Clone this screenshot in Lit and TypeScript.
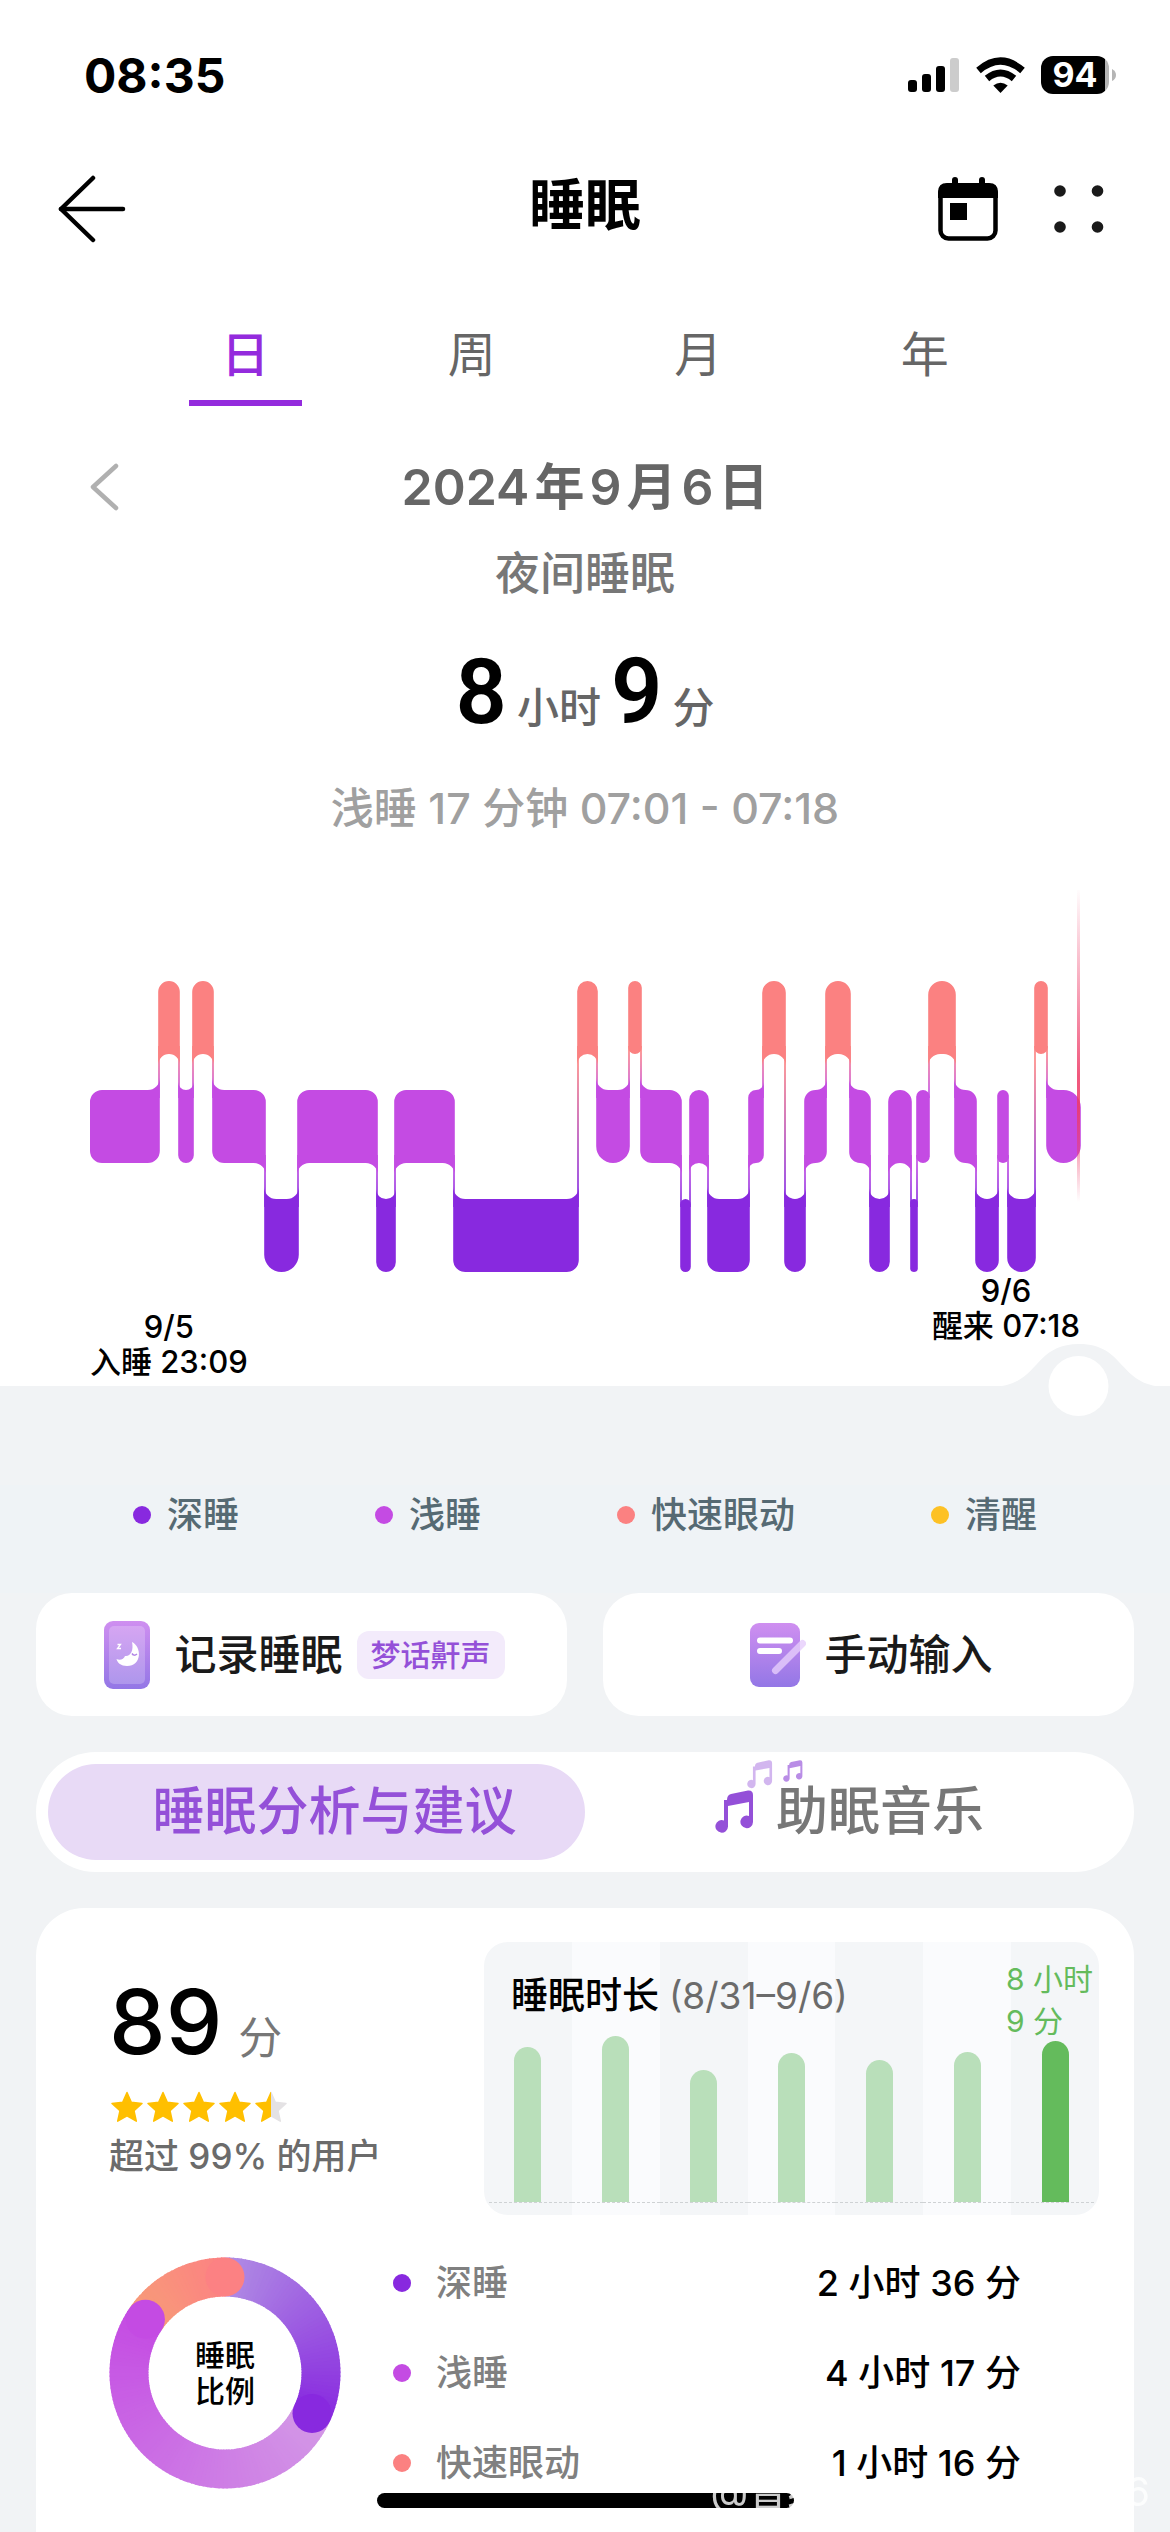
import { LitElement, html, svg, css } from "lit";
import { customElement, state } from "lit/decorators.js";
import { classMap } from "lit/directives/class-map.js";

type Stage = "rem" | "light" | "deep";

const COLORS: Record<Stage, string> = { rem: "#fb8181", light: "#c44be3", deep: "#8829df" };
const LEVELS: Record<Stage, number> = { rem: 981, light: 1090, deep: 1199 };
const BAND = 73;
const NIGHT_START = 90;

/* Each stage with the x at which it ends. */
const NIGHT: [Stage, number][] = [
  ["light", 159], ["rem", 179], ["light", 193], ["rem", 213], ["light", 265], ["deep", 298],
  ["light", 377], ["deep", 395], ["light", 454], ["deep", 578], ["rem", 597], ["light", 629],
  ["rem", 641], ["light", 681], ["deep", 690], ["light", 708], ["deep", 749], ["light", 763],
  ["rem", 785], ["deep", 805], ["light", 826], ["rem", 850], ["light", 870], ["deep", 889],
  ["light", 911], ["deep", 917], ["light", 929], ["rem", 955], ["light", 976], ["deep", 998],
  ["light", 1008], ["deep", 1035], ["rem", 1047], ["light", 1080],
];

const arrow = (points: string) => svg`<polyline points=${points} fill="none" stroke="currentColor" stroke-width="4.5" stroke-linecap="round" stroke-linejoin="round"/>`;

@customElement("sleep-stages")
export class SleepStages extends LitElement {
  static styles = css`
    :host { display: block; }
    .plot { display: block; width: 100%; height: auto; }
  `;

  private band(i: number) {
    const [stage, endX] = NIGHT[i];
    const x0 = (i ? NIGHT[i - 1][1] : NIGHT_START) - (i ? 0.8 : 0);
    const x1 = endX + 0.8;
    const w = x1 - x0;
    const top = LEVELS[stage];
    const bottom = top + BAND;
    const narrow = w < 14.5 && i !== NIGHT.length - 1;
    const r = w < 36 ? w / 2 : 12;
    const s = Math.min(12, w / 2);
    const prev = i ? LEVELS[NIGHT[i - 1][0]] - top : 0;
    const next = i < NIGHT.length - 1 ? LEVELS[NIGHT[i + 1][0]] - top : 0;
    const tl = prev < 0 && !narrow ? 0 : r;
    const bl = prev > 0 && !narrow ? 0 : r;
    const tr = next < 0 && !narrow ? 0 : r;
    const br = next > 0 && !narrow ? 0 : r;
    const d = `M${x0 + tl} ${top}H${x1 - tr}A${tr} ${tr} 0 0 1 ${x1} ${top + tr}V${bottom - br}A${br} ${br} 0 0 1 ${x1 - br} ${bottom}H${x0 + bl}A${bl} ${bl} 0 0 1 ${x0} ${bottom - bl}V${top + tl}A${tl} ${tl} 0 0 1 ${x0 + tl} ${top}Z`;
    const fillet = (x: number, dir: number, y: number, up: number) =>
      `M${x} ${y}V${y + up * s}A${s} ${s} 0 0 ${dir * up > 0 ? 1 : 0} ${x + dir * s} ${y}Z`;
    let extra = "";
    if (!narrow) {
      if (tl === 0) extra += fillet(x0, 1, top, -1);
      if (bl === 0) extra += fillet(x0, 1, bottom, 1);
      if (tr === 0) extra += fillet(x1, -1, top, -1);
      if (br === 0) extra += fillet(x1, -1, bottom, 1);
    }
    return svg`<path d=${d + extra} fill=${COLORS[stage]}/>`;
  }

  private link(i: number) {
    const a = NIGHT[i][0];
    const b = NIGHT[i + 1][0];
    const [hi, lo] = LEVELS[a] < LEVELS[b] ? [a, b] : [b, a];
    const y = LEVELS[hi] + BAND - 8;
    return svg`<rect x=${NIGHT[i][1] - 0.8} y=${y} width="1.6" height=${LEVELS[lo] + 8 - y} fill=${`url(#${hi}-${lo})`}/>`;
  }

  render() {
    const pair = (a: Stage, b: Stage) => svg`
      <linearGradient id=${`${a}-${b}`} x1="0" y1="0" x2="0" y2="1">
        <stop offset="0.1" stop-color=${COLORS[a]}/><stop offset="0.9" stop-color=${COLORS[b]}/>
      </linearGradient>`;
    return html`
      <svg class="plot" viewBox="0 890 1170 383" role="img" aria-label="睡眠阶段">
        <defs>
          ${pair("rem", "light")}${pair("rem", "deep")}${pair("light", "deep")}
          <linearGradient id="cursor" x1="0" y1="0" x2="0" y2="1">
            <stop offset="0" stop-color="#ee3a66" stop-opacity="0"/>
            <stop offset="0.6" stop-color="#ee3a66" stop-opacity="0.85"/>
            <stop offset="0.7" stop-color="#ee3a66" stop-opacity="0.85"/>
            <stop offset="1" stop-color="#ee3a66" stop-opacity="0"/>
          </linearGradient>
        </defs>
        ${NIGHT.slice(0, -1).map((_, i) => this.link(i))}
        ${NIGHT.map((_, i) => this.band(i))}
        <rect x="1077" y="887" width="3" height="315" fill="url(#cursor)"/>
      </svg>`;
  }
}

@customElement("stage-ring")
export class StageRing extends LitElement {
  static styles = css`
    :host { display: grid; width: 232px; height: 232px; place-items: center; flex: none; }
    .ring, .caption { grid-area: 1 / 1; }
    .ring { display: block; width: 232px; height: 232px; }
    .caption { margin: 0; font-size: 30px; line-height: 36px; font-weight: 500; color: #000; text-align: center; }
  `;

  render() {
    const parts = [
      { from: 0, to: 115, start: [176, 140, 228], end: [136, 41, 223] },
      { from: 115, to: 304, start: [211, 152, 230], end: [196, 75, 227] },
      { from: 304, to: 360, start: [247, 155, 120], end: [252, 129, 131] },
    ];
    const at = (deg: number) => {
      const t = (deg * Math.PI) / 180;
      return [116 + 96 * Math.sin(t), 116 - 96 * Math.cos(t)];
    };
    const slices = parts.flatMap((p) => {
      const n = Math.ceil((p.to - p.from) / 2);
      return Array.from({ length: n }, (_, k) => {
        const a = p.from + ((p.to - p.from) * k) / n;
        const b = Math.min(p.to, p.from + ((p.to - p.from) * (k + 1)) / n + 0.6);
        const [x0, y0] = at(a);
        const [x1, y1] = at(b);
        const c = p.start.map((v, j) => Math.round(v + ((p.end[j] - v) * k) / n));
        return svg`<path d=${`M${x0} ${y0}A96 96 0 0 1 ${x1} ${y1}`} fill="none" stroke=${`rgb(${c.join(",")})`} stroke-width="39"/>`;
      });
    });
    return html`
      <svg class="ring" viewBox="0 0 232 232" aria-hidden="true">
        ${slices}
        ${parts.map((p) => {
          const [x, y] = at(p.to);
          return svg`<circle cx=${x} cy=${y} r="19.5" fill=${`rgb(${p.end.join(",")})`}/>`;
        })}
      </svg>
      <p class="caption">睡眠<br />比例</p>`;
  }
}

@customElement("app-root")
export class AppRoot extends LitElement {
  @state() private period = 0;
  @state() private panel = 0;

  static styles = css`
    :host { display: block; font-family: Inter, "Noto Sans CJK SC", sans-serif; color: #000; }
    button { font: inherit; color: inherit; background: none; border: 0; padding: 0; margin: 0; cursor: pointer; }
    h1, h2, p, ul { margin: 0; padding: 0; font-weight: inherit; }
    ul { list-style: none; }
    svg { display: block; flex: none; }

    .page { display: flex; flex-direction: column; min-height: 100vh; background: #f1f3f5; overflow: hidden; }
    .hero { background: #fff; padding-bottom: 5px; }

    .status { display: flex; align-items: center; justify-content: space-between; height: 150px; padding: 0 54px 0 84px; }
    .clock { font-size: 48px; font-weight: 700; }
    .signals { display: flex; align-items: center; gap: 16px; }
    .battery { display: flex; align-items: center; gap: 3px; }
    .level { width: 68px; height: 38px; border-radius: 12px; background: linear-gradient(90deg, #000 94%, #b5b5b5 94%); color: #fff; font-size: 34px; line-height: 38px; font-weight: 700; text-align: center; }

    .bar { display: grid; grid-template-columns: 1fr auto 1fr; align-items: center; height: 118px; padding: 0 56px; }
    .title { font-size: 56px; line-height: 72px; font-weight: 700; padding-bottom: 8px; }
    .actions { display: flex; justify-content: flex-end; align-items: center; gap: 56px; padding-right: 10px; }

    .periods { display: flex; margin-top: 51px; padding: 0 132px; }
    .period { flex: 1; font-size: 48px; line-height: 72px; color: #666; }
    .period::after { content: ""; display: block; width: 50%; height: 6px; margin: 9px auto 0; }
    .period.on { color: #942bdd; font-weight: 500; }
    .period.on::after { background: #942bdd; }

    .day { display: grid; grid-template-columns: 1fr auto 1fr; align-items: center; margin-top: 51px; padding: 0 88px; }
    .prev { justify-self: start; color: #b0b0b0; }
    .date { display: flex; gap: 5px; font-size: 50px; line-height: 60px; font-weight: 600; color: #666; }
    .kind { margin-top: 27px; font-size: 45px; line-height: 60px; font-weight: 500; color: #777; text-align: center; }
    .total { display: flex; justify-content: center; align-items: baseline; gap: 10px; margin-top: 41px; line-height: 48px; font-size: 42px; font-weight: 500; color: #666; }
    .figure { font-family: Roboto, sans-serif; font-size: 90px; line-height: 96px; font-weight: 600; color: #000; }
    .span { margin-top: 37px; font-size: 43px; line-height: 60px; font-weight: 500; color: #a0a0a0; text-align: center; }
    .stages { margin-top: 52px; }
    .axis { display: flex; justify-content: space-between; align-items: flex-start; padding: 0 90px; font-size: 31px; line-height: 35px; font-weight: 500; text-align: center; }
    .asleep { padding: 36px 0 2px; }

    .key { position: relative; padding-top: 99px; }
    .bump { position: absolute; right: 0; top: -42px; }
    .legend { display: flex; justify-content: center; gap: 136px; height: 108px; background: #eff3f6; font-size: 36px; line-height: 60px; font-weight: 500; color: #566a73; }
    .legend li { display: flex; align-items: center; gap: 16px; height: 60px; }
    .dot { width: 18px; height: 18px; border-radius: 50%; flex: none; }
    .dot.deep { background: #8829df; }
    .dot.light { background: #c44be3; }
    .dot.rem { background: #fb8181; }
    .dot.awake { background: #fdc125; }

    .content { display: flex; flex: 1; flex-direction: column; gap: 36px; padding: 0 36px; }
    .tools { display: grid; grid-template-columns: 1fr 1fr; gap: 36px; }
    .tool { display: flex; align-items: center; justify-content: center; gap: 18px; height: 123px; padding-left: 6px; border-radius: 36px; background: #fff; font-size: 42px; line-height: 60px; font-weight: 500; color: #1a1a1a; }
    .phone { margin-right: 6px; }
    .tag { padding: 0 14px; border-radius: 12px; background: #f3ebfb; color: #9450d8; font-size: 30px; line-height: 48px; margin-left: -4px; }

    .panels { display: grid; grid-template-columns: 1fr 1fr; padding: 12px; border-radius: 60px; background: #fff; }
    .panel { display: flex; align-items: center; justify-content: center; gap: 22px; height: 96px; border-radius: 48px; font-size: 52px; line-height: 72px; font-weight: 500; color: #777; }
    .panel:first-child { padding-left: 36px; }
    .panel:last-child { padding-right: 8px; }
    .panel.on { background: #e8daf6; color: #9450d8; }
    .tune { position: relative; display: block; }
    .notes { position: absolute; left: 32px; top: -30px; }

    .card { flex: 1; padding: 34px 35px 0 73px; border-radius: 48px 48px 0 0; background: #fff; }
    .summary { display: flex; justify-content: space-between; }
    .score { display: flex; align-items: baseline; gap: 16px; margin-top: 32px; line-height: 48px; font-size: 44px; color: #777; }
    .points { font-size: 90px; line-height: 96px; font-weight: 500; color: #000; }
    .stars { display: block; margin-top: 21px; }
    .rank { margin-top: 9px; font-size: 35px; line-height: 48px; font-weight: 500; color: #6b6b6b; }

    .week { display: grid; width: 615px; height: 273px; border-radius: 24px; overflow: hidden; }
    .bars, .heading { grid-area: 1 / 1; }
    .bars { display: flex; }
    .slot { display: flex; flex: 1; flex-direction: column; justify-content: flex-end; align-items: center; background: #f4f6f8; }
    .slot:nth-child(even) { background: #fafbfd; }
    .slot::after { content: ""; width: 100%; height: 12px; border-top: 1px dashed #cfd2d4; }
    .column { width: 27px; border-radius: 14px 14px 0 0; background: #b9dfba; }
    .slot:last-child .column { background: #64bb5c; }
    .heading { display: flex; justify-content: space-between; align-items: flex-start; padding: 16px 6px 0 27px; }
    .name { padding-top: 14px; font-size: 37px; line-height: 48px; font-weight: 500; }
    .range { color: #6b6b6b; font-weight: 400; }
    .value { font-size: 30px; line-height: 42px; color: #64bb5c; }

    .ratio { display: flex; margin-top: 42px; gap: 52px; }
    .rows { flex: 1; padding-right: 78px; font-size: 36px; line-height: 90px; font-weight: 500; margin-top: -19px; }
    .row { display: flex; align-items: center; gap: 25px; }
    .label { flex: 1; color: #808080; }

    .home { position: fixed; left: 50%; bottom: 24px; width: 417px; height: 15px; margin-left: -208px; border-radius: 8px; background: #000; }
    .mark { position: fixed; right: 20px; bottom: 16px; font-size: 39px; line-height: 48px; color: rgba(255, 255, 255, 0.8); }
  `;

  render() {
    const star = "M16 1.5L20.3 11.3L31 12.4L23 19.6L25.3 30.2L16 24.8L6.7 30.2L9 19.6L1 12.4L11.7 11.3Z";
    const note = svg`<path d="M12 10Q12 5 16 4L33 0.5Q38 0 38 5V32A6.3 6.3 0 1 1 34 26V12L13 16V36.500A6.300 6.300 0 1 1 9 30.500V10Z"/>`;
    const legend = [["deep", "深睡"], ["light", "浅睡"], ["rem", "快速眼动"], ["awake", "清醒"]];
    const rows = [["deep", "深睡", "2 小时 36 分"], ["light", "浅睡", "4 小时 17 分"], ["rem", "快速眼动", "1 小时 16 分"]];
    return html`
      <div class="page">
        <section class="hero">
          <div class="status">
            <span class="clock">08:35</span>
            <div class="signals">
              <svg width="52" height="36" viewBox="0 0 52 36" aria-hidden="true">
                <rect x="0" y="23" width="9" height="12" rx="3"/><rect x="14" y="17" width="9" height="18" rx="3"/>
                <rect x="28" y="9" width="9" height="26" rx="3"/><rect x="42" y="1" width="9" height="34" rx="3" fill="#ccc"/>
              </svg>
              <svg width="49" height="36" viewBox="0 0 49 36" aria-hidden="true">
                <g fill="none" stroke="#000" stroke-width="7"><path d="M2.500 13.500Q24.500 -5.500 46.500 13.500"/><path d="M11 21.500Q24.500 10.500 38 21.500"/></g>
                <path d="M17.300 28.500Q24.500 23 31.700 28.500L24.500 36Z"/>
              </svg>
              <div class="battery">
                <span class="level">94</span>
                <svg width="4" height="12" viewBox="0 0 4 12" aria-hidden="true"><path d="M0 0Q4 2 4 6T0 12Z" fill="#b5b5b5"/></svg>
              </div>
            </div>
          </div>
          <header class="bar">
            <button aria-label="返回">
              <svg width="72" height="68" viewBox="0 0 72 68">${arrow("37,3 5,34 37,65")}${arrow("5,34 67,34")}</svg>
            </button>
            <h1 class="title">睡眠</h1>
            <div class="actions">
              <button aria-label="日历">
                <svg width="60" height="64" viewBox="0 0 60 64">
                  <rect x="2.500" y="8.500" width="55" height="53" rx="8" fill="#fff" stroke="#000" stroke-width="4.500"/>
                  <path d="M0 21V15Q0 6 9 6H51Q60 6 60 15V21Z"/><rect x="14" width="6" height="12" rx="3"/><rect x="41" width="6" height="12" rx="3"/>
                  <rect x="12" y="26" width="17" height="17"/>
                </svg>
              </button>
              <button aria-label="更多">
                <svg width="50" height="50" viewBox="0 0 50 50" fill="#1a1a1a"><circle cx="6" cy="7" r="5.800"/><circle cx="43.500" cy="7" r="5.800"/><circle cx="6" cy="43" r="5.800"/><circle cx="43.500" cy="43" r="5.800"/></svg>
              </button>
            </div>
          </header>
          <div class="periods" role="tablist">
            ${["日", "周", "月", "年"].map((t, i) => html`<button role="tab" aria-selected=${this.period === i} class=${classMap({ period: true, on: this.period === i })} @click=${() => (this.period = i)}>${t}</button>`)}
          </div>
          <div class="day">
            <button class="prev" aria-label="前一天"><svg width="32" height="50" viewBox="0 0 32 50">${arrow("28,4 5,25 28,46")}</svg></button>
            <p class="date">${["2024", "年", "9", "月", "6", "日"].map((t) => html`<span>${t}</span>`)}</p>
          </div>
          <h2 class="kind">夜间睡眠</h2>
          <p class="total"><span class="figure">8</span><span>小时</span><span class="figure">9</span><span>分</span></p>
          <p class="span">浅睡 17 分钟 07:01 - 07:18</p>
          <sleep-stages class="stages"></sleep-stages>
          <div class="axis">
            <p class="asleep">9/5<br />入睡 23:09</p>
            <p>9/6<br />醒来 07:18</p>
          </div>
        </section>

        <section class="key">
          <svg class="bump" width="178" height="72" viewBox="992 1344 178 72" aria-hidden="true">
            <path d="M992 1387C1040 1386 1032 1344 1079 1344S1118 1386 1166 1387Z" fill="#f1f3f5"/>
            <circle cx="1078.500" cy="1386" r="30" fill="#fff"/>
          </svg>
          <ul class="legend">
            ${legend.map(([k, t]) => html`<li><i class="dot ${k}"></i>${t}</li>`)}
          </ul>
        </section>

        <main class="content">
          <div class="tools">
            <button class="tool">
              <svg class="phone" width="46" height="68" viewBox="0 0 46 68" aria-hidden="true">
                <defs><linearGradient id="violet" x1="0" y1="0" x2="0" y2="1"><stop offset="0" stop-color="#cf8ff0"/><stop offset="1" stop-color="#9377e6"/></linearGradient></defs>
                <rect width="46" height="68" rx="9" fill="url(#violet)"/>
                <rect x="5" y="5" width="36" height="58" rx="5" fill="#fff" opacity="0.22"/>
                <path d="M28 21C38 26 38 45 23 45C17 45 13.500 42 12.500 38C16 40 20 38 21 35C26 36 30 30 28 21Z" fill="#fff"/>
                <path d="M13.500 23.500H16.500L13.500 27.500H17" fill="none" stroke="#fff" stroke-width="1.300"/>
                <path d="M28 32.500Q30 35.500 33 33" fill="none" stroke="#b184e6" stroke-width="1.500"/>
              </svg>
              <span>记录睡眠</span><span class="tag">梦话鼾声</span>
            </button>
            <button class="tool">
              <svg width="56" height="64" viewBox="0 0 56 64" aria-hidden="true">
                <defs><linearGradient id="sheet" x1="0" y1="0" x2="0" y2="1"><stop offset="0" stop-color="#cf8ff0"/><stop offset="1" stop-color="#9377e6"/></linearGradient></defs>
                <rect width="50" height="64" rx="9" fill="url(#sheet)"/>
                <path d="M10 17.500H40M10 28H29" stroke="#fff" stroke-width="6" stroke-linecap="round"/>
                <path d="M25.500 47.500L52.500 20.500" stroke="#e6cdfb" stroke-opacity="0.8" stroke-width="7" stroke-linecap="round"/>
              </svg>
              <span>手动输入</span>
            </button>
          </div>

          <div class="panels" role="tablist">
            <button role="tab" aria-selected=${this.panel === 0} class=${classMap({ panel: true, on: this.panel === 0 })} @click=${() => (this.panel = 0)}>睡眠分析与建议</button>
            <button role="tab" aria-selected=${this.panel === 1} class=${classMap({ panel: true, on: this.panel === 1 })} @click=${() => (this.panel = 1)}>
              <span class="tune">
                <svg width="39" height="44" viewBox="0 0 39 44" fill="#9450d8" aria-hidden="true">${note}</svg>
                <svg class="notes" width="58" height="30" viewBox="0 0 58 30" fill="#9450d8" aria-hidden="true">
                  <g transform="scale(0.66)" opacity="0.42">${note}</g><g transform="translate(36 0) scale(0.510)" opacity="0.65">${note}</g>
                </svg>
              </span>
              助眠音乐
            </button>
          </div>

          <section class="card">
            <div class="summary">
              <div>
                <p class="score"><span class="points">89</span><span>分</span></p>
                <svg class="stars" width="180" height="32" viewBox="0 0 180 32" role="img" aria-label="4.5 星">
                  <defs><linearGradient id="half"><stop offset="0.5" stop-color="#ffbf00"/><stop offset="0.5" stop-color="#e4e2e4"/></linearGradient></defs>
                  ${[0, 1, 2, 3, 4].map((i) => svg`<path d=${star} transform=${`translate(${2 + i * 36} 0)`} stroke-linejoin="round" stroke-width="1.5" stroke=${i < 4 ? "#ffbf00" : "url(#half)"} fill=${i < 4 ? "#ffbf00" : "url(#half)"}/>`)}
                </svg>
                <p class="rank">超过 99% 的用户</p>
              </div>
              <div class="week">
                <div class="bars">
                  ${[155, 166, 132, 149, 142, 150, 161].map((h) => html`<div class="slot"><div class="column" style="height:${h}px"></div></div>`)}
                </div>
                <div class="heading">
                  <h2 class="name">睡眠时长 <span class="range">(8/31–9/6)</span></h2>
                  <p class="value">8 小时<br />9 分</p>
                </div>
              </div>
            </div>
            <div class="ratio">
              <stage-ring></stage-ring>
              <ul class="rows">
                ${rows.map(([k, t, v]) => html`<li class="row"><i class="dot ${k}"></i><span class="label">${t}</span><span>${v}</span></li>`)}
              </ul>
            </div>
          </section>
        </main>
        <div class="home"></div>
        <div class="mark">@曾经7654 inhouse086</div>
      </div>`;
  }
}
